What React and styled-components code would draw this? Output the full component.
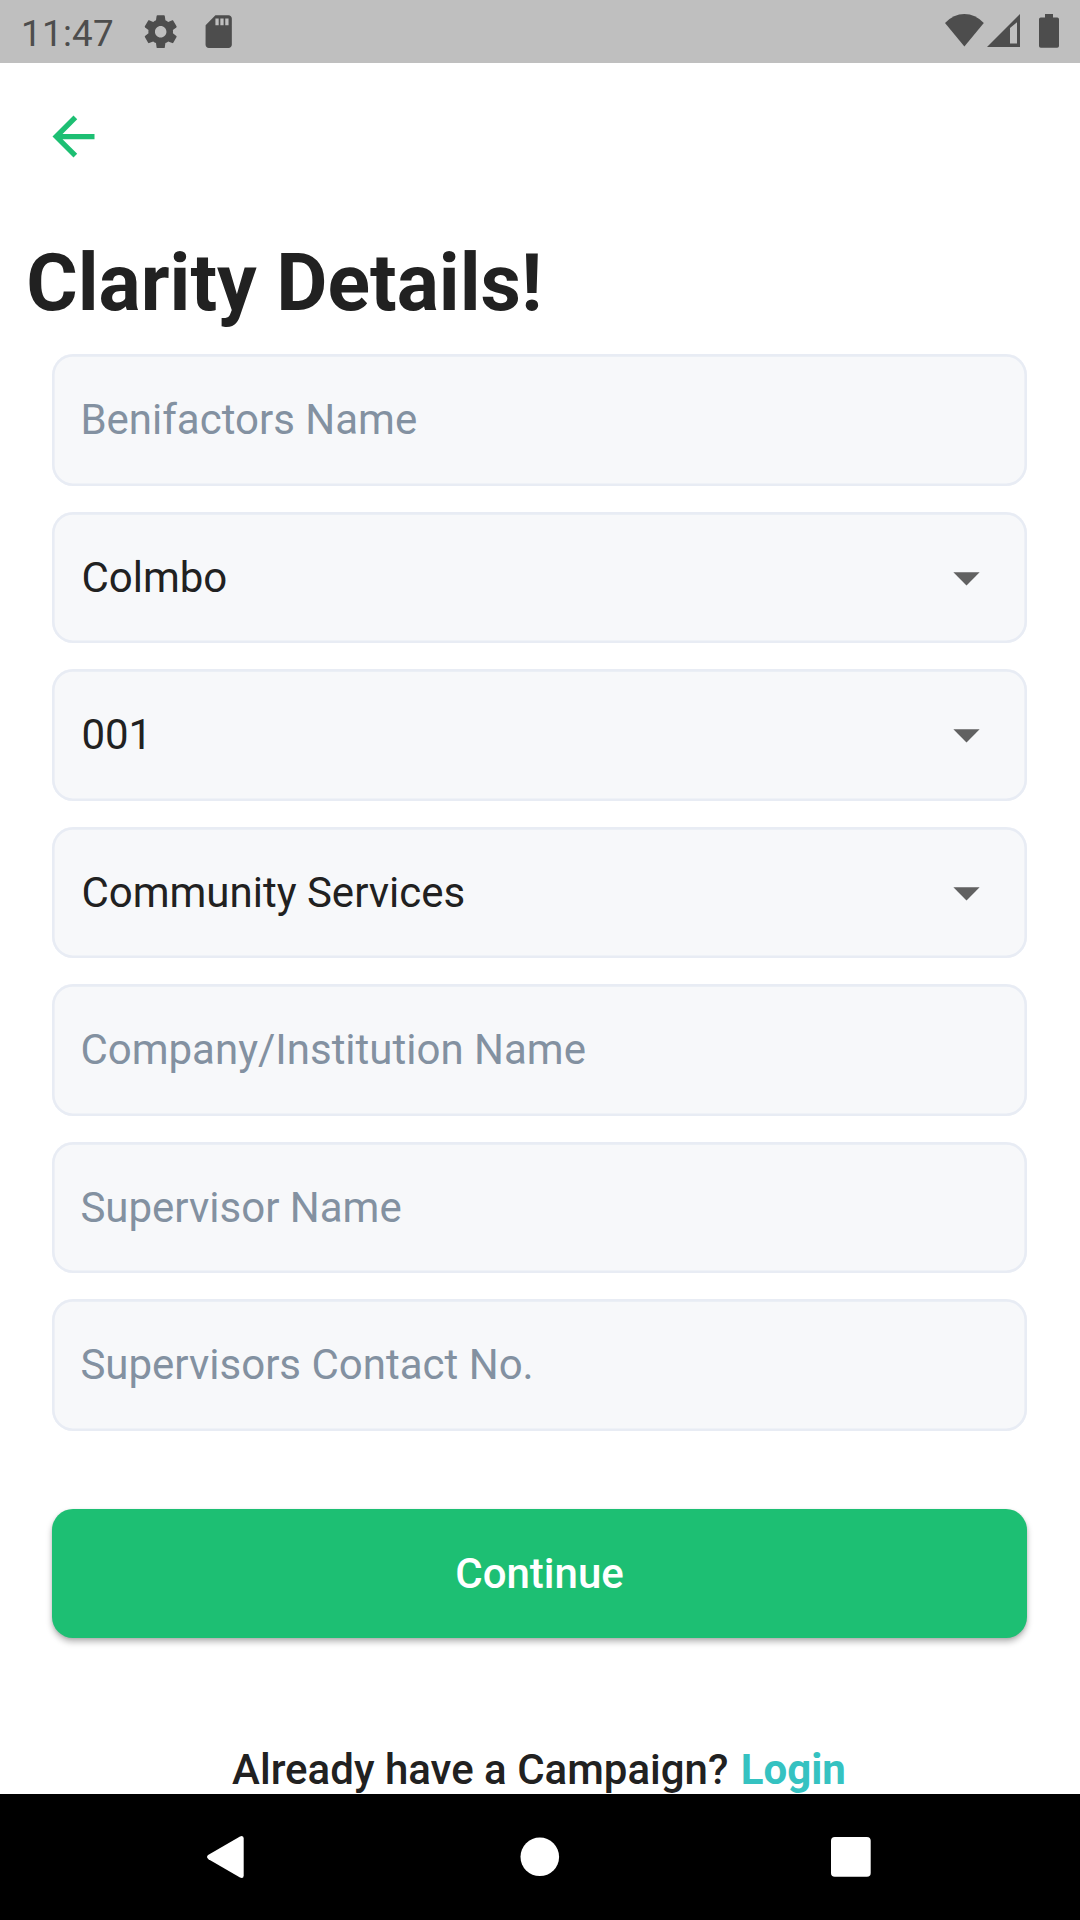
import React from "react";
import styled, { createGlobalStyle } from "styled-components";

const GlobalStyle = createGlobalStyle`
  *, *::before, *::after { box-sizing: border-box; }
  body {
    margin: 0;
    background: #fff;
    font-family: Roboto, "Liberation Sans", sans-serif;
    color: #212121;
  }
`;

const Screen = styled.div`
  display: flex;
  flex-direction: column;
  width: 1080px;
  height: 1920px;
  overflow: hidden;
  background: #fff;
`;

const StatusBar = styled.header`
  display: flex;
  align-items: center;
  justify-content: space-between;
  height: 63px;
  padding: 0 13px 0 21px;
  background: #bfbfbf;
  color: #4d4d4d;
`;

const StatusGroup = styled.div`
  display: flex;
  align-items: center;
  height: 63px;
`;

const Clock = styled.span`
  width: 120.3px;
  font-size: 36.75px;
  line-height: 43px;
  letter-spacing: 0.3px;
  padding-top: 4px;
`;

const StatusIcon = styled.svg`
  display: block;
  width: 39.4px;
  height: 39.4px;
  margin-right: 18.6px;
  fill: currentColor;
`;

const SignalIcons = styled.svg`
  display: block;
  width: 127px;
  height: 63px;
  fill: currentColor;
`;

const Content = styled.main`
  flex: 1;
  min-height: 0;
  display: flex;
  flex-direction: column;
  overflow: hidden;
`;

const BackButton = styled.button`
  display: block;
  width: 63px;
  height: 63px;
  margin: 42px 0 0 42px;
  padding: 0;
  border: 0;
  background: none;
  color: #1dbf73;

  svg {
    display: block;
    width: 63px;
    height: 63px;
    fill: currentColor;
  }
`;

const Title = styled.h1`
  margin: 69px 0 0;
  padding-left: 26.25px;
  font-size: 78.75px;
  line-height: 92px;
  font-weight: 700;
`;

const Form = styled.form`
  display: flex;
  flex-direction: column;
  gap: 26.25px;
  padding: 25.275px 53px 0 52px;
`;

const Field = styled.div`
  display: flex;
  align-items: center;
  justify-content: space-between;
  height: 131.25px;
  padding: 0 28.875px 0 ${({ $filled }) => ($filled ? "29.4px" : "28.4px")};
  border-radius: 21px;
  background: #f7f8fa;
  box-shadow: inset 0 0 0 2.625px #e8ecf4;
  font-size: 42px;
  line-height: 49px;
  color: ${({ $filled }) => ($filled ? "#212121" : "#8391a1")};
`;

const Caret = styled.svg`
  display: block;
  width: 63px;
  height: 63px;
  fill: #616161;
`;

const Continue = styled.button`
  height: 128.6px;
  margin: 52.5px 0 0;
  border: 0;
  border-radius: 21px;
  background: #1dbf73;
  box-shadow: 0 4px 6px rgba(0, 0, 0, 0.27), 0 1px 3px rgba(0, 0, 0, 0.1);
  color: #fff;
  font: 500 42px/49px Roboto, "Liberation Sans", sans-serif;
`;

const LoginLine = styled.p`
  margin: 107px 0 0;
  padding-right: 2px;
  text-align: center;
  font-size: 42px;
  line-height: 49px;
  font-weight: 500;
`;

const LoginLink = styled.span`
  margin-left: 2px;
  color: #35c2c1;
  font-weight: 700;
`;

const NavBar = styled.nav`
  display: flex;
  align-items: center;
  justify-content: center;
  gap: 247px;
  height: 126px;
  background: #000;

  svg {
    display: block;
    width: 64px;
    height: 64px;
    fill: #fff;
  }
`;

const fields = [
  { label: "Benifactors Name" },
  { label: "Colmbo", select: true },
  { label: "001", select: true },
  { label: "Community Services", select: true },
  { label: "Company/Institution Name" },
  { label: "Supervisor Name" },
  { label: "Supervisors Contact No." },
];

export default function App() {
  return (
    <>
      <GlobalStyle />
      <Screen>
        <StatusBar>
          <StatusGroup>
            <Clock>11:47</Clock>
            <StatusIcon viewBox="0 0 24 24">
              <path d="M19.43 12.98c.04-.32.07-.64.07-.98s-.03-.66-.07-.98l2.11-1.65c.19-.15.24-.42.12-.64l-2-3.46c-.12-.22-.39-.3-.61-.22l-2.49 1c-.52-.4-1.08-.73-1.69-.98l-.38-2.65C14.46 2.18 14.25 2 14 2h-4c-.25 0-.46.18-.49.42l-.38 2.65c-.61.25-1.17.59-1.69.98l-2.49-1c-.23-.09-.49 0-.61.22l-2 3.46c-.13.22-.07.49.12.64l2.11 1.65c-.04.32-.07.65-.07.98s.03.66.07.98l-2.11 1.65c-.19.15-.24.42-.12.64l2 3.46c.12.22.39.3.61.22l2.49-1c.52.4 1.08.73 1.69.98l.38 2.65c.03.24.24.42.49.42h4c.25 0 .46-.18.49-.42l.38-2.65c.61-.25 1.17-.59 1.69-.98l2.49 1c.23.09.49 0 .61-.22l2-3.46c.12-.22.07-.49-.12-.64l-2.11-1.65zM12 15.5c-1.93 0-3.5-1.57-3.5-3.5s1.57-3.5 3.5-3.5 3.5 1.57 3.5 3.5-1.57 3.5-3.5 3.5z" />
            </StatusIcon>
            <StatusIcon viewBox="0 0 24 24">
              <path d="M18 2h-8L4.02 8 4 20c0 1.1.9 2 2 2h12c1.1 0 2-.9 2-2V4c0-1.1-.9-2-2-2zm-6 6h-2V4h2v4zm3 0h-2V4h2v4zm3 0h-2V4h2v4z" />
            </StatusIcon>
          </StatusGroup>
          <SignalIcons viewBox="0 0 127 63">
            <path d="M5 23Q13.500 14 24.400 14T43.800 23L24.400 46.600Z" />
            <path fillRule="evenodd" d="M47 47L80 14V47ZM70 28V43.500H77V22.200Z" />
            <path d="M105 14H113V17.500H117.200Q119 17.500 119 19.300V46Q119 47.800 117.200 47.800H100.800Q99 47.800 99 46V19.300Q99 17.500 100.800 17.500H105Z" />
          </SignalIcons>
        </StatusBar>
        <Content>
          <BackButton type="button" aria-label="Back">
            <svg viewBox="0 0 24 24">
              <path d="M20 11H7.830l5.590-5.590L12 4l-8 8 8 8 1.410-1.410L7.830 13H20v-2z" />
            </svg>
          </BackButton>
          <Title>Clarity Details!</Title>
          <Form>
            {fields.map(({ label, select }) => (
              <Field key={label} $filled={select}>
                <span>{label}</span>
                {select && (
                  <Caret viewBox="0 0 24 24">
                    <path d="M7 10l5 5 5-5z" />
                  </Caret>
                )}
              </Field>
            ))}
            <Continue type="button">Continue</Continue>
          </Form>
          <LoginLine>
            Already have a Campaign? <LoginLink>Login</LoginLink>
          </LoginLine>
        </Content>
        <NavBar>
          <svg viewBox="0 0 64 64">
            <path d="M11.500 29.800L43 11.400Q46.700 10 46.700 13.600V50.400Q46.700 54 43 52.600L11.500 34.200Q8.500 32 11.500 29.800Z" />
          </svg>
          <svg viewBox="0 0 64 64">
            <circle cx="31.800" cy="31.800" r="19.300" />
          </svg>
          <svg viewBox="0 0 64 64">
            <rect x="12" y="12" width="39.700" height="39.700" rx="3.800" />
          </svg>
        </NavBar>
      </Screen>
    </>
  );
}
